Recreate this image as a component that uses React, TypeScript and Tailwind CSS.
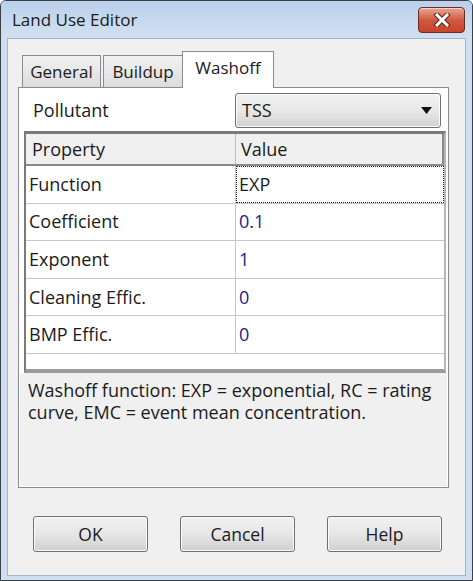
const rows = [
  { name: "Function", value: "EXP", selected: true },
  { name: "Coefficient", value: "0.1" },
  { name: "Exponent", value: "1" },
  { name: "Cleaning Effic.", value: "0" },
  { name: "BMP Effic.", value: "0" },
];

function CloseButton() {
  return (
    <div className="flex h-[26px] w-[47px] items-center justify-center rounded-[4px] border border-[#6b2b22] bg-gradient-to-b from-[#e9a696] via-[#d0583f] to-[#c8432a] shadow-[inset_0_1px_0_rgba(255,255,255,0.5)]">
      <svg width="18" height="14" viewBox="0 0 18 14">
        <path d="M4 2 L14 12 M14 2 L4 12" stroke="#5a2219" strokeWidth="5" strokeLinecap="square" />
        <path d="M4 2 L14 12 M14 2 L4 12" stroke="#ffffff" strokeWidth="3" strokeLinecap="square" />
      </svg>
    </div>
  );
}

function WinButton({ label }: { label: string }) {
  return (
    <button
      type="button"
      className="flex h-[36px] w-[115px] items-center justify-center rounded-[3px] border border-[#707070] bg-gradient-to-b from-[#f2f2f2] via-[#e6e6e6] to-[#d0d0d0] text-[17.5px] text-[#1b1b1b] shadow-[inset_0_0_0_1px_#fafafa]"
    >
      {label}
    </button>
  );
}

export default function App() {
  return (
    <div className="flex h-[581px] w-[473px] flex-col overflow-hidden rounded-t-[6px] border border-[#3c3f44] bg-[#cddff1] font-['Open_Sans',sans-serif] text-[18px] text-[#1b1b1b]">
      {/* title bar */}
      <div className="flex h-[37px] shrink-0 items-center justify-between bg-gradient-to-b from-[#bad0ea] to-[#d1e1f2] pl-[11px] pr-[7px]">
        <span className="text-[17px] text-[#1a1a1a]">Land Use Editor</span>
        <CloseButton />
      </div>

      {/* client area */}
      <div className="mx-[6px] mb-[4px] flex flex-1 flex-col border border-[#a3b6cb] bg-[#f0f0f0] pl-[10px] pt-[13px]">
        {/* tabs */}
        <div className="relative z-10 ml-[4px] flex h-[36px] items-end text-[17px]">
          <div className="mb-[1px] flex h-[32px] w-[79px] items-center justify-center border border-b-0 border-[#898c95] bg-gradient-to-b from-[#f2f2f2] to-[#dcdcdc]">
            General
          </div>
          <div className="mb-[1px] ml-[2px] flex h-[32px] w-[80px] items-center justify-center border border-b-0 border-[#898c95] bg-gradient-to-b from-[#f2f2f2] to-[#dcdcdc]">
            Buildup
          </div>
          <div className="-ml-[1px] flex h-[37px] w-[92px] items-start justify-center border border-b-0 border-[#898c95] bg-white pt-[3px]">
            Washoff
          </div>
        </div>

        {/* tab page */}
        <div className="-mt-[1px] flex h-[401px] w-[431px] flex-col border border-[#898c95] bg-white p-[1px]">
          <div className="flex flex-col pl-[4px] pr-[1px] pt-[4px]">
            <div className="flex items-center">
              <span className="ml-[9px]">Pollutant</span>
              <div className="ml-auto mr-[5px] flex h-[35px] w-[206px] items-center justify-between rounded-[3px] border border-[#707070] bg-gradient-to-b from-[#f2f2f2] via-[#e8e8e8] to-[#d2d2d2] pl-[6px] pr-[8px] shadow-[inset_0_0_0_1px_#fbfbfb]">
                <span>TSS</span>
                <svg width="11" height="7" viewBox="0 0 11 7">
                  <path d="M0 0 H11 L5.5 7 Z" fill="#111" />
                </svg>
              </div>
            </div>

            {/* grid */}
            <div className="mt-[3px] flex h-[242px] flex-col border-b-[4px] border-l-[2px] border-r-[2px] border-t-[3px] border-b-[#9c9c9c] border-l-[#7a7a7a] border-r-[#b5b5b5] border-t-[#7a7a7a] bg-white">
              <div className="flex h-[32px] shrink-0 border-b-[2px] border-[#8a8a8a] bg-[#f0f0f0]">
                <div className="flex w-[210px] items-center border-r border-[#bdbdbd] pl-[6px]">Property</div>
                <div className="flex flex-1 items-center border-r-[2px] border-[#8a8a8a] pl-[5px]">Value</div>
              </div>
              {rows.map((r) => (
                <div key={r.name} className="flex h-[37.6px] shrink-0 border-b border-[#c8c8c8]">
                  <div className="flex w-[210px] items-center border-r border-[#c8c8c8] pl-[3px]">{r.name}</div>
                  {r.selected ? (
                    <div className="flex flex-1 items-center border border-dotted border-[#222] pl-[2px]">{r.value}</div>
                  ) : (
                    <div className="flex flex-1 items-center pl-[3px] text-[#1c1c8c]">{r.value}</div>
                  )}
                </div>
              ))}
            </div>
          </div>

          {/* description */}
          <div className="flex-1 bg-[#f0f0f0] pl-[8px] pt-[6px] leading-[22px]">
            Washoff function: EXP = exponential, RC = rating
            <br />
            curve, EMC = event mean concentration.
          </div>
        </div>

        {/* buttons */}
        <div className="ml-[15px] mt-[28px] flex gap-[32px]">
          <WinButton label="OK" />
          <WinButton label="Cancel" />
          <WinButton label="Help" />
        </div>
      </div>
    </div>
  );
}
